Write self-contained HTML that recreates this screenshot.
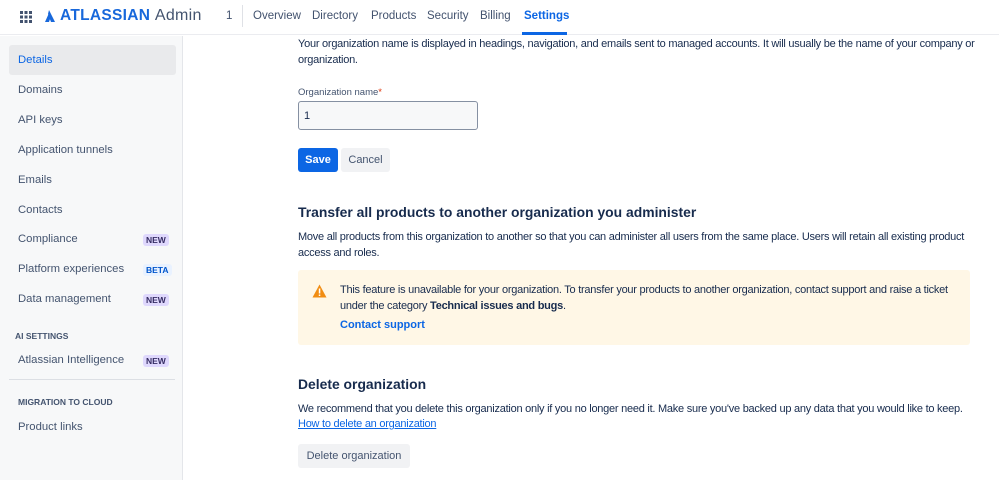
<!DOCTYPE html>
<html><head><meta charset="utf-8"><style>
*{box-sizing:border-box;margin:0;padding:0}
body{width:999px;height:480px;overflow:hidden;font-family:"Liberation Sans",sans-serif;color:#172b4d;background:#fff;position:relative;font-size:11px}
.top{position:absolute;left:0;top:0;width:999px;height:35px;border-bottom:1px solid #ebecf0;background:#fff}
.abs{position:absolute;white-space:nowrap}
.nav{top:10px;font-size:11.5px;color:#42526e}
.side{position:absolute;left:0;top:36px;width:183px;height:444px;background:#f7f8f9;border-right:1px solid #e4e6ea}
.si{position:absolute;left:18px;font-size:11.3px;color:#44546f}
.badge{position:absolute;left:143px;font-size:8.5px;font-weight:bold;padding:1px 3px;border-radius:3px;background:#dfd8fd;color:#352c63}
.hd{font-size:8.5px;font-weight:bold;color:#44546f}
.p{font-size:11px;color:#172b4d;line-height:16px;letter-spacing:-0.25px}
h2{position:absolute;font-size:13.9px;font-weight:bold;color:#172b4d;white-space:nowrap}
</style></head><body>
<div class="top">
 <svg class="abs" style="left:20px;top:11px" width="12" height="12"><g fill="#42526e"><rect x="0" y="0" width="3" height="3"/><rect x="4.5" y="0" width="3" height="3"/><rect x="9" y="0" width="3" height="3"/><rect x="0" y="4.5" width="3" height="3"/><rect x="4.5" y="4.5" width="3" height="3"/><rect x="9" y="4.5" width="3" height="3"/><rect x="0" y="9" width="3" height="3"/><rect x="4.5" y="9" width="3" height="3"/><rect x="9" y="9" width="3" height="3"/></g></svg>
 <svg class="abs" style="left:44px;top:9px" width="12" height="14"><path d="M1 13 L5 4 L7 7 L5 13Z M5 1 L11 13 L7 13 L4 5Z" fill="#1868db"/></svg>
 <div class="abs" style="left:60px;top:7px;font-size:15.5px;font-weight:bold;color:#1868db;letter-spacing:.3px">ATLASSIAN <span style="font-weight:normal;color:#44546f;font-size:16px">Admin</span></div>
 <div class="abs" style="left:226px;top:10px;font-size:11.5px;color:#42526e">1</div>
 <div class="abs" style="left:242px;top:5px;width:1px;height:22px;background:#dfe1e6"></div>
 <div class="abs nav" style="left:253px">Overview</div>
 <div class="abs nav" style="left:312px">Directory</div>
 <div class="abs nav" style="left:371px">Products</div>
 <div class="abs nav" style="left:427px">Security</div>
 <div class="abs nav" style="left:480px">Billing</div>
 <div class="abs nav" style="left:524px;color:#0c66e4;font-weight:bold">Settings</div>
 <div class="abs" style="left:522px;top:32px;width:45px;height:3px;background:#0c66e4"></div>
</div>
<div class="side">
 <div class="abs" style="left:9px;top:9px;width:167px;height:30px;background:#e9eaec;border-radius:3px"></div>
 <div class="si" style="top:18px;color:#0c66e4">Details</div>
 <div class="si" style="top:48px">Domains</div>
 <div class="si" style="top:78px">API keys</div>
 <div class="si" style="top:108px">Application tunnels</div>
 <div class="si" style="top:138px">Emails</div>
 <div class="si" style="top:168px">Contacts</div>
 <div class="si" style="top:197px">Compliance</div><div class="badge" style="top:198px">NEW</div>
 <div class="si" style="top:227px">Platform experiences</div><div class="badge" style="top:228px;background:#e9f2ff;color:#0055cc">BETA</div>
 <div class="si" style="top:257px">Data management</div><div class="badge" style="top:258px">NEW</div>
 <div class="si hd" style="left:15px;top:295px">AI SETTINGS</div>
 <div class="si" style="top:318px">Atlassian Intelligence</div><div class="badge" style="top:319px">NEW</div>
 <div class="abs" style="left:9px;top:343px;width:166px;height:1px;background:#dcdfe4"></div>
 <div class="si hd" style="top:361px">MIGRATION TO CLOUD</div>
 <div class="si" style="top:385px">Product links</div>
</div>
<div class="abs p" style="left:298px;top:36px;white-space:normal;width:698px">Your organization name is displayed in headings, navigation, and emails sent to managed accounts. It will usually be the name of your company or organization.</div>
<div class="abs" style="left:298px;top:87px;font-size:9.5px;color:#44546f">Organization name<span style="color:#de350b">*</span></div>
<div class="abs" style="left:298px;top:101px;width:180px;height:29px;border:1px solid #8590a2;border-radius:3px;background:#f7f8f9;padding:8px 5px;font-size:11px">1</div>
<div class="abs" style="left:298px;top:148px;width:40px;height:24px;background:#0c66e4;border-radius:3px;color:#fff;font-weight:bold;font-size:11px;text-align:center;line-height:24px">Save</div>
<div class="abs" style="left:341px;top:148px;width:49px;height:24px;background:#f1f2f4;border-radius:3px;color:#44546f;font-size:11px;text-align:center;line-height:24px">Cancel</div>
<h2 style="left:298px;top:204px">Transfer all products to another organization you administer</h2>
<div class="abs p" style="left:298px;top:229px;white-space:normal;width:672px">Move all products from this organization to another so that you can administer all users from the same place. Users will retain all existing product access and roles.</div>
<div class="abs" style="left:298px;top:270px;width:672px;height:75px;background:#fff7e6;border-radius:3px"></div>
<svg class="abs" style="left:312px;top:284px" width="15" height="14"><path d="M7.5 0.5 L14.5 13.5 L0.5 13.5Z" fill="#f18d13"/><rect x="6.8" y="4.5" width="1.5" height="5" fill="#fff"/><rect x="6.8" y="10.5" width="1.5" height="1.5" fill="#fff"/></svg>
<div class="abs p" style="left:340px;top:282px;white-space:normal;width:615px">This feature is unavailable for your organization. To transfer your products to another organization, contact support and raise a ticket under the category <b>Technical issues and bugs</b>.</div>
<div class="abs" style="left:340px;top:319px;font-size:11px;font-weight:bold;color:#0c66e4">Contact support</div>
<h2 style="left:298px;top:376px">Delete organization</h2>
<div class="abs p" style="left:298px;top:401px">We recommend that you delete this organization only if you no longer need it. Make sure you've backed up any data that you would like to keep.</div>
<div class="abs p" style="left:298px;top:416px;color:#0c66e4;text-decoration:underline">How to delete an organization</div>
<div class="abs" style="left:298px;top:444px;width:112px;height:24px;background:#f1f2f4;border-radius:3px;color:#44546f;font-size:11px;text-align:center;line-height:24px">Delete organization</div>
</body></html>
